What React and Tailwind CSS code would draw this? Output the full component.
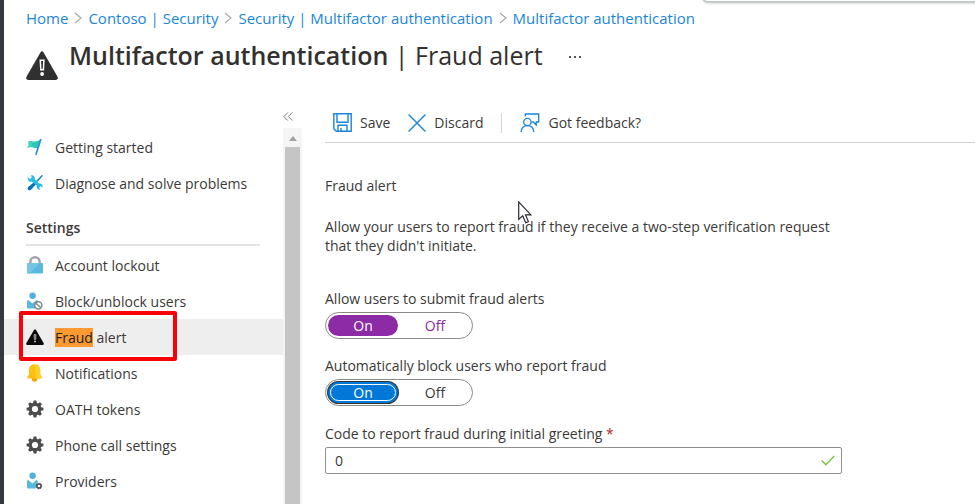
import { useState } from "react";

function WarningIcon({ className, color }) {
  return (
    <svg viewBox="0 0 32 29" className={className} aria-hidden="true">
      <path d="M14.4 1.4Q16-1 17.6 1.4L31.4 25.6Q32.6 28.8 29.6 29H2.4Q-.6 28.8.6 25.6Z" fill={color} />
      <path d="M14.3 9.2h3.6l-.5 9.6h-2.6z" fill={color} stroke="#fff" strokeWidth="1.5" />
      <circle cx="16.1" cy="23" r="1.9" fill="#fff" />
    </svg>
  );
}

function SmallWarningIcon() {
  return (
    <svg viewBox="0 0 18 16" className="h-4 w-[18px]" aria-hidden="true">
      <path d="M8.1.8Q9-.4 9.9.8L17.6 14Q18.2 15.8 16.8 16H1.2Q-.2 15.8.4 14Z" fill="#0a0c0a" />
      <path d="M8 5.5h2l-.3 5H8.3z" fill="#777" stroke="#aaa" strokeWidth=".7" />
      <circle cx="9" cy="12.6" r="1" fill="#bbb" />
    </svg>
  );
}

function FlagIcon() {
  return (
    <svg viewBox="0 0 18 18" className="size-[18px]" aria-hidden="true">
      <path d="M2.2 3.4C5 1.8 8 5 13.8 2.3L12 9.4C9 11.4 5.5 7.8 1 10.2L2.6 7Z" fill="#3ad8b4" />
      <path d="M6 4.2C8.5 4.8 11 3.6 13.8 2.3L12 9.4C10 10.6 8 9.6 6 8.8z" fill="#2cc8b6" />
      <path d="M14 .8l1.7.4L10.6 17.2l-1.6-.5z" fill="#2a8fe0" />
    </svg>
  );
}

function ToolsIcon() {
  return (
    <svg viewBox="0 0 18 18" className="size-[18px]" aria-hidden="true">
      <path d="M16 1.8L10 8.2" stroke="#1787c8" strokeWidth="1.6" strokeLinecap="round" />
      <path d="M9.4 7l1.8 1.9-6.2 6.8c-2 1.6-4.5-.6-2.8-2.7z" fill="#0872b8" />
      <path d="M4.8 1.2c2.6-.5 4.6 1.7 3.9 4.1l4.2 4.3c2.4-.6 4.3 1.5 3.8 4l-2.1-1.5-1.5 1.6 1.5 2.1c-2.5.4-4.4-1.7-3.8-4L6.1 7.7C3.5 8.4 1.2 6 1.7 3.4L4 5.2l1.8-1.7z" fill="#22bde8" />
    </svg>
  );
}

function LockIcon() {
  return (
    <svg viewBox="0 0 18 18" className="size-[18px]" aria-hidden="true">
      <path d="M4.4 8V5.6a4.6 4.4 0 0 1 9.2 0V8" fill="none" stroke="#a0a5a8" strokeWidth="2.4" />
      <rect x="1" y="7" width="16" height="10.5" rx=".8" fill="#59b8dd" />
      <path d="M1.8 7H14L3.5 17.5H1.8Q1 17.5 1 16.7V7.8Q1 7 1.8 7z" fill="#74c5e4" />
    </svg>
  );
}

function UserIcon({ badge }) {
  return (
    <svg viewBox="0 0 18 18" className="size-[18px]" aria-hidden="true">
      <circle cx="6.6" cy="3.8" r="3.2" fill="#50b2dc" />
      <path d="M1 9.6Q1 8 2.4 8L6.5 11.6 10.4 8Q12 8 12 9.5L9.5 16.5H2Q1 16.5 1 15.5Z" fill="#59b8dd" />
      {badge === "block" ? (
        <>
          <circle cx="12.3" cy="13.3" r="3.6" fill="#fff" stroke="#85878a" strokeWidth="1.5" />
          <path d="M9.9 11.2l4.8 4.3" stroke="#85878a" strokeWidth="1.5" />
        </>
      ) : (
        <>
          <circle cx="13" cy="14" r="2.9" fill="none" stroke="#777" strokeWidth="1" strokeDasharray="1.4 .88" />
          <circle cx="13" cy="14" r="2.1" fill="#fff" stroke="#4d4d4d" strokeWidth="1.5" />
        </>
      )}
    </svg>
  );
}

function BellIcon() {
  return (
    <svg viewBox="0 0 18 18" className="size-[18px]" aria-hidden="true">
      <circle cx="8.6" cy="15" r="2.7" fill="#f5a400" />
      <path d="M8.6.3C4.6.3 3 3.2 3 6.4v4.2L1.4 12.8q-.3 1.6 1 1.6h12.4q1.3 0 1-1.6l-1.6-2.2V6.4C14.2 3.2 12.6.3 8.6.3z" fill="#ffbe12" />
      <path d="M8.6.3c4 0 5.6 2.9 5.6 6.1v4.2l1.6 2.2q.3 1.6-1 1.6H10z" fill="#ffd02a" />
    </svg>
  );
}

function GearIcon() {
  return (
    <svg viewBox="0 0 18 18" className="size-[18px]" aria-hidden="true">
      <g fill="#4d4d4d">
        {[0, 45, 90, 135].map((angle) => (
          <path key={angle} d="M7.7.6h2.6l.8 3v10.8l-.8 3H7.7l-.8-3V3.6z" transform={`rotate(${angle} 9 9)`} />
        ))}
        <circle cx="9" cy="9" r="6.2" />
      </g>
      <circle cx="9" cy="9" r="3.1" fill="#fff" />
    </svg>
  );
}

function SaveIcon() {
  return (
    <svg viewBox="0 0 19 19" className="size-[19px]" fill="none" stroke="#1b84d8" strokeWidth="1.4" aria-hidden="true">
      <path d="M.8.8h17.4v17.4H3.3L.8 15.8zM4 .8v8.4h11V.8M5 18v-5.7h9V18M8 18v-3" />
    </svg>
  );
}

function FeedbackIcon() {
  return (
    <svg viewBox="0 0 20 20" className="size-5" fill="none" stroke="#1b84d8" strokeWidth="1.3" aria-hidden="true">
      <circle cx="7.4" cy="9" r="3.7" />
      <path d="M1.1 19c.2-3.7 2.6-6.3 6.3-6.3s6.1 2.6 6.4 6.3" />
      <path d="M5.3 3.4V1h13.4v8h-2.5v3l-3-3h-1.5" />
    </svg>
  );
}

const SETTINGS = [
  { label: "Account lockout", icon: <LockIcon /> },
  { label: "Block/unblock users", icon: <UserIcon badge="block" /> },
  { label: "Fraud alert", icon: <SmallWarningIcon />, active: true },
  { label: "Notifications", icon: <BellIcon /> },
  { label: "OATH tokens", icon: <GearIcon /> },
  { label: "Phone call settings", icon: <GearIcon /> },
  { label: "Providers", icon: <UserIcon badge="gear" /> },
];

function NavItem({ icon, label, active }) {
  return (
    <li className={active ? "relative bg-[#eeeeee]" : ""}>
      <a href="#" aria-current={active ? "page" : undefined} className="flex h-9 items-center gap-[11px] pl-[22px]">
        {icon}
        {active ? (
          <span><mark className="bg-[#ff9a33] text-[#202020]">Fraud</mark> alert</span>
        ) : (
          label
        )}
      </a>
      {active && <span className="pointer-events-none absolute -top-2 left-[15px] z-10 h-[50px] w-[158px] rounded-xs border-4 border-[#fb0007]" />}
    </li>
  );
}

function Toggle({ name, legend, variant }) {
  const [value, setValue] = useState("On");
  const purple = variant === "purple";
  const on = purple
    ? "bg-[#8c2ba5] text-white"
    : "bg-[#0078d7] text-white ring-1 ring-[#333] outline-1 -outline-offset-3 outline-white";
  const off = purple ? "text-[#8c2ba5]" : "text-[#3a3a3a]";
  return (
    <fieldset>
      <legend className="h-[23px] leading-5">{legend}</legend>
      <div className="flex h-[27px] w-[148px] items-center justify-between rounded-full border border-[#8a8a88] px-[2px]">
        {["On", "Off"].map((option) => (
          <label
            key={option}
            className={`flex h-[21px] w-[70px] items-center justify-center rounded-full ${value === option ? on : off}`}
          >
            <input
              type="radio"
              name={name}
              value={option}
              checked={value === option}
              onChange={() => setValue(option)}
              className="sr-only"
            />
            {option}
          </label>
        ))}
      </div>
    </fieldset>
  );
}

const CRUMBS = ["Home", "Contoso | Security", "Security | Multifactor authentication", "Multifactor authentication"];

export default function App() {
  const [code, setCode] = useState("0");
  return (
    <div className="relative flex h-screen flex-col overflow-hidden border-l-4 border-[#35393e] bg-white font-['Open_Sans','Noto_Sans',sans-serif] text-[14px] text-[#3b3a39]">
      <div className="absolute -top-4 -right-2 left-[698px] h-[19px] rounded-md border-2 border-[#c3cbc8] bg-white shadow-sm" />

      <header className="h-[107px] shrink-0 pt-2 pl-[22px]">
        <nav aria-label="Breadcrumb">
          <ol className="flex h-5 items-center text-[15px] text-[#1b86d9]">
            {CRUMBS.map((crumb, index) => (
              <li key={crumb} className="flex items-center whitespace-nowrap">
                {index > 0 && (
                  <svg viewBox="0 0 8 12" className="mx-[6px] h-3 w-2" fill="none" stroke="#aaa" strokeWidth="1.2" aria-hidden="true">
                    <path d="M1 1l6 5-6 5" />
                  </svg>
                )}
                <a href="#">{crumb}</a>
              </li>
            ))}
          </ol>
        </nav>
        <div className="flex items-start pt-[11px]">
          <WarningIcon className="mt-3 mr-[11px] w-8" color="#303030" />
          <h1 className="text-[25px] leading-8 font-semibold whitespace-nowrap text-[#323130]">
            Multifactor authentication <span className="font-normal">| Fraud alert</span>
          </h1>
          <button type="button" aria-label="More" className="mt-3 ml-6 flex h-3 w-4 items-center justify-center gap-[3px]">
            <span className="size-[2px] bg-[#555]" />
            <span className="size-[2px] bg-[#555]" />
            <span className="size-[2px] bg-[#555]" />
          </button>
        </div>
      </header>

      <div className="flex min-h-0 flex-1">
        <aside className="flex w-[298px] shrink-0 flex-col">
          <button type="button" aria-label="Collapse menu" className="mr-2 flex h-[21px] w-[11px] shrink-0 items-center self-end pb-[2px]">
            <svg viewBox="0 0 10 9" className="h-[9px] w-[10px]" fill="none" stroke="#777" strokeWidth="1" aria-hidden="true">
              <path d="M4.8.5l-4 4 4 4M9.3.5l-4 4 4 4" />
            </svg>
          </button>
          <div className="flex min-h-0 flex-1">
            <nav aria-label="Menu" className="min-w-0 flex-1 pt-px">
              <ul>
                <NavItem icon={<FlagIcon />} label="Getting started" />
                <NavItem icon={<ToolsIcon />} label="Diagnose and solve problems" />
              </ul>
              <h2 className="mr-[23px] mb-px ml-[22px] h-[45px] border-b-2 border-[#e3e3e3] pt-[17px] leading-5 font-semibold">Settings</h2>
              <ul>
                {SETTINGS.map((item) => (
                  <NavItem key={item.label} {...item} />
                ))}
              </ul>
            </nav>
            <div className="flex w-[19px] flex-col items-center bg-[#f5f5f5]" aria-hidden="true">
              <svg viewBox="0 0 8 5" className="mt-2 mb-[6px] h-[5px] w-2 shrink-0" fill="#a3a3a3">
                <path d="M0 5l4-5 4 5z" />
              </svg>
              <div className="w-[15px] flex-1 bg-[#c5c5c5]" />
            </div>
          </div>
        </aside>

        <main className="relative min-w-0 flex-1 pl-[23px]">
          <div className="flex h-9 items-center border-b border-[#d2d2d2] pb-1 pl-2">
            <button type="button" className="mr-[18px] flex items-center gap-2"><SaveIcon />Save</button>
            <button type="button" className="flex items-center gap-2">
              <svg viewBox="0 0 18 18" className="size-[18px]" fill="none" stroke="#1b84d8" strokeWidth="1.4" aria-hidden="true">
                <path d="M.6.6l16.8 16.8M17.4.6L.6 17.4" />
              </svg>
              Discard
            </button>
            <span className="mx-[18px] h-5 w-px bg-[#d5d5cf]" />
            <button type="button" className="flex items-center gap-2"><FeedbackIcon />Got feedback?</button>
          </div>

          <h2 className="mt-[33px] leading-5">Fraud alert</h2>
          <p className="mt-[21px] max-w-[517px] leading-[19px]">
            Allow your users to report fraud if they receive a two-step verification request that they didn't initiate.
          </p>
          <form className="mt-[34px] flex max-w-[517px] flex-col">
            <Toggle name="submit-alerts" legend="Allow users to submit fraud alerts" variant="purple" />
            <div className="mt-[17px]">
              <Toggle name="auto-block" legend="Automatically block users who report fraud" variant="blue" />
            </div>
            <label htmlFor="code" className="mt-[18px] mb-[3px] leading-5">
              Code to report fraud during initial greeting <span className="text-[#b3262c]">*</span>
            </label>
            <div className="flex h-[27px] items-center rounded-xs border border-[#8f918c] pr-[6px] pl-[9px]">
              <input id="code" value={code} onChange={(e) => setCode(e.target.value)} className="min-w-0 flex-1 outline-none" />
              <svg viewBox="0 0 14 11" className="h-[11px] w-[14px]" fill="none" stroke="#7cc142" strokeWidth="1.4" aria-hidden="true">
                <path d="M.7 5.5l4.2 4.2L13.3 1" />
              </svg>
            </div>
          </form>

          <svg viewBox="0 0 14 23" className="pointer-events-none absolute top-[94px] left-[216px] h-[23px] w-[14px]" aria-hidden="true">
            <path d="M.7.9v17.6l4-3.7 3 6.9 2.7-1.1-2.9-6.7h5.4z" fill="#fff" stroke="#2b2b35" strokeWidth="1.2" />
          </svg>
        </main>
      </div>
    </div>
  );
}
